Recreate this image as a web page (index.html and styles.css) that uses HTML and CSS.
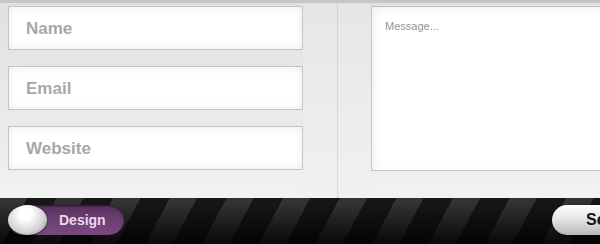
FILE: index.html
```html
<!DOCTYPE html>
<html lang="en">
  <head>
    <meta charset="UTF-8" />
    <meta name="viewport" content="width=device-width, initial-scale=1.0" />
    <title>Contact</title>
    <link rel="stylesheet" href="styles.css">
  </head>
  <body>
    <form id="contactForm">
      <div class="form-area">
        <div class="fields">
          <input type="text" placeholder="Name" />
          <input type="email" placeholder="Email" />
          <input type="text" placeholder="Website" />
        </div>
        <div class="divider"><span class="dots"></span></div>
        <textarea class="message" placeholder="Message..."></textarea>
      </div>

      <div class="toolbar">
        <!-- 토글 스위치 -->
        <label class="toggle">
          <span class="knob"></span>
          <span class="toggle-text">Design</span>
        </label>
        <button type="submit" class="btn-send">Send</button>
      </div>
    </form>
  </body>
</html>
```

FILE: styles.css
```css
* {
  box-sizing: border-box;
}

body {
  margin: 0;
  overflow: hidden;
  font-family: "Liberation Sans", Arial, sans-serif;
}

#contactForm {
  width: 600px;
  height: 244px;
  overflow: hidden;
}

.form-area {
  display: flex;
  height: 198px;
  border-top: 3px solid #c6c6c6;
  background: linear-gradient(to bottom, #e1e1e1, #eeeeee 85%, #f2f2f2);
}

.fields {
  display: flex;
  flex-direction: column;
  gap: 16px;
  width: 303px;
  padding: 3px 0 0 8px;
  flex-shrink: 0;
}

.fields input {
  display: block;
  width: 295px;
  height: 44px;
  padding: 1px 17px 0;
  border: 1px solid #c4c4c4;
  background-color: #fff;
  box-shadow: 0 0 8px rgba(0, 0, 0, 0.09) inset;
  font-family: inherit;
  font-size: 17px;
  font-weight: bold;
  color: #555;
}

.fields input::placeholder {
  color: #a8a8a8;
}

.divider {
  display: flex;
  justify-content: center;
  width: 68px;
  flex-shrink: 0;
  background: linear-gradient(to bottom, #e6e6e6, #f1f1f1);
}

.dots {
  width: 0;
  border-left: 1px dotted #c2c2c2;
}

.message {
  width: 240px;
  height: 165px;
  margin-top: 3px;
  flex-shrink: 0;
  padding: 13px 13px;
  border: 1px solid #c4c4c4;
  border-right: none;
  background-color: #fff;
  box-shadow: 2px 2px 10px rgba(0, 0, 0, 0.07) inset;
  font-family: inherit;
  font-size: 11px;
  resize: none;
}

.message::placeholder {
  color: #969696;
}

.toolbar {
  display: flex;
  align-items: center;
  justify-content: space-between;
  height: 46px;
  padding: 0 0 2px 8px;
  background:
    linear-gradient(to bottom, rgba(0, 0, 0, 0) 10%, rgba(0, 0, 0, 0.85)),
    repeating-linear-gradient(118deg, #333 0 24px, #161616 24px 50px);
}

.toggle {
  display: flex;
  align-items: center;
  width: 116px;
  height: 30px;
  border-radius: 15px;
  background: linear-gradient(to bottom, #54305a, #6e3f73 50%, #7a4a80);
  box-shadow: 0 1px 2px rgba(0, 0, 0, 0.6) inset;
  cursor: pointer;
}

.knob {
  width: 39px;
  height: 30px;
  border-radius: 50%;
  background: radial-gradient(ellipse at 45% 30%, #ffffff 20%, #d4d4d4 60%, #8e8e8e);
  box-shadow: 0 1px 2px rgba(0, 0, 0, 0.5);
}

.toggle-text {
  margin-left: 12px;
  font-size: 14px;
  font-weight: bold;
  color: #ead9ee;
}

.btn-send {
  flex-shrink: 0;
  width: 90px;
  height: 30px;
  margin-right: -42px;
  padding: 0 0 0 34px;
  text-align: left;
  border: none;
  border-radius: 15px 0 0 15px;
  background: linear-gradient(to bottom, #ffffff, #e6e6e6 45%, #b8b8b8);
  box-shadow: 0 1px 2px rgba(0, 0, 0, 0.5);
  font-family: inherit;
  font-size: 16px;
  font-weight: bold;
  color: #111;
  cursor: pointer;
}
```
